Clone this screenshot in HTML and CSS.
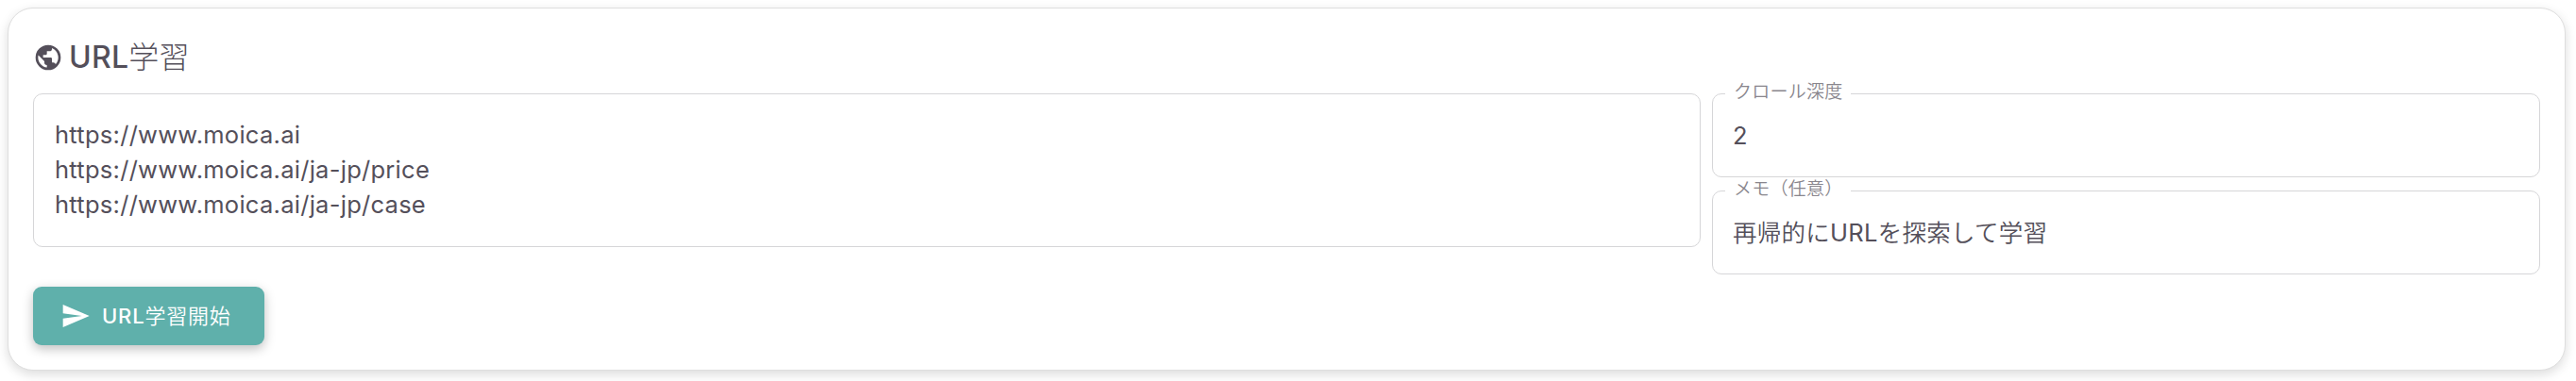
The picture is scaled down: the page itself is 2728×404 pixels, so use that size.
FILE: index.html
```
<!DOCTYPE html>
<html lang="ja">

<head>
    <meta charset="UTF-8">
    <meta name="viewport" content="width=device-width, initial-scale=1.0">
    <title>URL学習</title>
    <link rel="stylesheet" href="styles.css">
</head>

<body>
    <form class="card">
        <h2 class="card-title">
            <svg class="icon-globe" viewBox="0 0 24 24" fill="currentColor">
                <path d="M17.9 17.39c-.26-.8-1.01-1.39-1.9-1.39h-1v-3a1 1 0 0 0-1-1H8v-2h2a1 1 0 0 0 1-1V7h2a2 2 0 0 0 2-2v-.41a7.984 7.984 0 0 1 2.9 12.8M11 19.93c-3.95-.49-7-3.85-7-7.93 0-.62.08-1.22.21-1.79L9 15v1a2 2 0 0 0 2 2m1-16A10 10 0 0 0 2 12a10 10 0 0 0 10 10 10 10 0 0 0 10-10A10 10 0 0 0 12 2z"/>
            </svg>
            <span>URL<span class="jp">学習</span></span>
        </h2>
        <div class="fields">
            <textarea class="url-list" spellcheck="false">https://www.moica.ai
https://www.moica.ai/ja-jp/price
https://www.moica.ai/ja-jp/case</textarea>
            <div class="options">
                <fieldset class="field">
                    <legend>クロール深度</legend>
                    <div class="value">2</div>
                </fieldset>
                <fieldset class="field">
                    <legend>メモ（任意）</legend>
                    <div class="value"><span class="jp">再帰的に</span>URL<span class="jp">を探索して学習</span></div>
                </fieldset>
            </div>
        </div>
        <button type="button" class="start-button">
            <svg class="icon-send" viewBox="0 0 24 24" fill="currentColor">
                <path d="M2 21l21-9L2 3v7l15 2-15 2z"/>
            </svg>
            <span class="label">URL<span class="jp">学習開始</span></span>
        </button>
    </form>
</body>

</html>
```

FILE: styles.css
```
* {
    box-sizing: border-box;
}

body {
    background-color: #fff;
    color: #544f5a;
    font-family: Inter, "Noto Sans CJK JP", sans-serif;
    font-size: 25.5px;
    letter-spacing: 0.27px;
    margin: 0;
    padding: 8px 11px 11px 8px;
}

.jp {
    font-weight: 350;
}

.card {
    height: 385px;
    padding: 29px 26px 0 26px;
    border: 1px solid #dedede;
    border-radius: 27px;
    background-color: #fff;
    box-shadow: 0 4px 12px rgba(0, 0, 0, 0.14);
}

.card-title {
    display: flex;
    align-items: center;
    gap: 6px;
    height: 46px;
    margin: 0 0 15px;
    font-size: 32px;
    font-weight: 500;
    line-height: 46px;
}

.card-title .jp {
    font-weight: 300;
}

.icon-globe {
    width: 32px;
    height: 32px;
}

.fields {
    display: grid;
    grid-template-columns: 1766px 1fr;
    column-gap: 12px;
    height: 192px;
}

.url-list {
    height: 163px;
    padding: 24px 22px;
    border: 1px solid #d6d6d8;
    border-radius: 10px;
    background-color: transparent;
    color: inherit;
    font: inherit;
    letter-spacing: inherit;
    line-height: 37px;
    outline: none;
    overflow: hidden;
    resize: none;
}

/* legends sit on the top border, so each field starts 10px higher */
.options {
    display: flex;
    flex-direction: column;
    gap: 4px;
    margin-top: -10px;
}

.field {
    height: 99px;
    margin: 0;
    padding: 0 13px;
    border: 1px solid #d6d6d8;
    border-radius: 10px;
}

.field legend {
    padding: 0 8px 2px 9px;
    color: #89868d;
    font-size: 19px;
    font-weight: 350;
    line-height: 18px;
}

.value {
    padding: 16px 9px 0 8px;
    line-height: 37px;
}

.start-button {
    display: flex;
    align-items: center;
    gap: 12px;
    height: 62px;
    margin-top: 13px;
    padding: 0 35px 0 29px;
    border: none;
    border-radius: 9px;
    background-color: #5fb0ab;
    box-shadow: 0 4px 12px rgba(0, 0, 0, 0.25);
    color: #fff;
    font-family: inherit;
    font-size: 22px;
    font-weight: 500;
    letter-spacing: 0.8px;
    cursor: pointer;
}

.start-button .label {
    padding-bottom: 4px;
}

.icon-send {
    width: 32px;
    height: 32px;
}
```
